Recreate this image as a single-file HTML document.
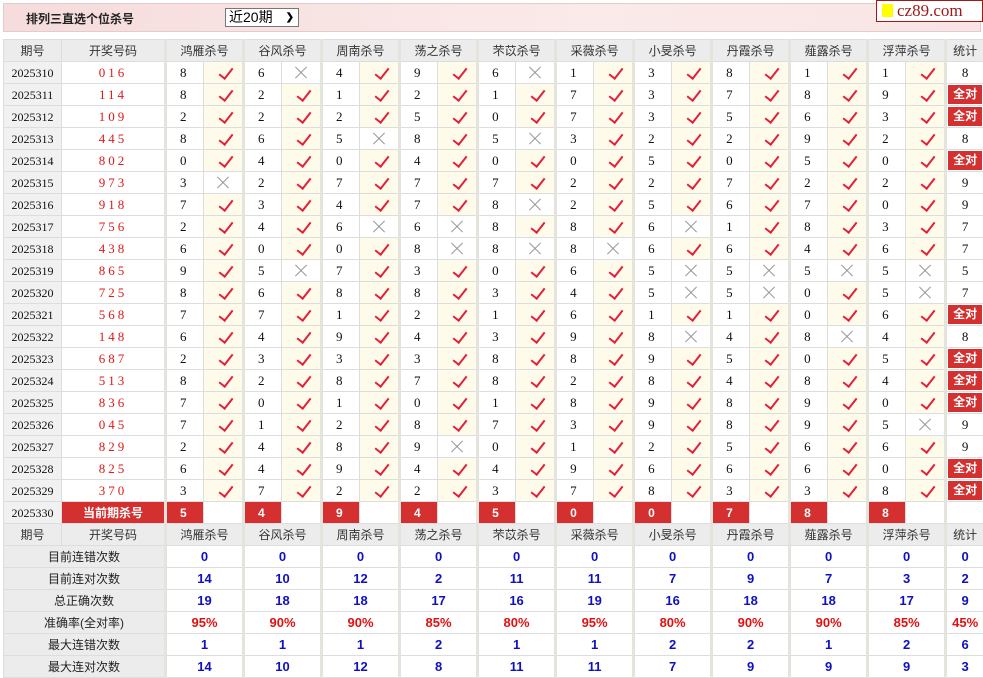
<!DOCTYPE html>
<html><head><meta charset="utf-8"><style>
body{margin:0;background:#fff;width:983px;height:678px;overflow:hidden;position:relative;font-family:"Liberation Serif","Noto Serif CJK SC",serif}
.top{position:absolute;left:3px;top:3px;width:976px;height:27px;background:linear-gradient(90deg,#f6dcdc,#fbeaea 60%,#f8e4e4);border:1px solid #e4cccc}
.title{position:absolute;left:22px;top:6px;font:bold 12px "Liberation Sans","Noto Sans CJK SC",sans-serif;color:#222}
.sel{position:absolute;left:221px;top:4px;width:69px;height:17px;border:1px solid #777;background:#fff;font:14px "Liberation Sans","Noto Sans CJK SC",sans-serif;line-height:17px;padding-left:3px;box-sizing:content-box}
.sel b{position:absolute;right:4px;top:0;font-size:10px}
.logo{position:absolute;left:876px;top:0;width:105px;height:20px;background:#fff;border:1px solid #a01818;font:17px "Liberation Serif",serif;color:#a01818;line-height:20px}
.logo i{display:inline-block;width:11px;height:13px;background:#ff0;margin:0 4px 0 5px;vertical-align:-1px}
table{position:absolute;left:3px;top:39px;border-collapse:collapse;table-layout:fixed;width:980px}
tr{height:22px}
td{height:21px;line-height:20px;border:1px solid #ddd;text-align:center;padding:0;font-size:13px;color:#111;overflow:hidden;white-space:nowrap;box-sizing:border-box}
.h td{background:#ececec;font:12px "Liberation Sans","Noto Sans CJK SC",sans-serif;color:#333;line-height:20px}
td.p{background:#f1f1f1;font-size:12px}
td.c{color:#e01818;letter-spacing:3px}
td.g{border-left:3px solid #e4e4dc;text-align:left;padding-left:13px}
.h td.s,td.s{border-left:3px solid #e4e4dc}
td.k{background:#fffbea;position:relative}
td.k:after{content:"";position:absolute;left:18px;top:3px;width:6px;height:12px;border-right:2px solid #e2213c;border-bottom:2px solid #e2213c;transform:rotate(38deg)}
td.x{position:relative}
td.x:before,td.x:after{content:"";position:absolute;left:11px;top:10px;width:16px;height:1px;background:#999;transform:rotate(45deg)}
td.x:after{transform:rotate(-45deg)}
td.q{padding:1px}
td.q span{display:block;background:#d43030;color:#fff;font:bold 12px "Liberation Sans","Noto Sans CJK SC",sans-serif;line-height:19px;height:19px}
td.r{background:#d43030;color:#fff;font:bold 12px "Liberation Sans","Noto Sans CJK SC",sans-serif;text-align:left;padding-left:13px}
td.rr{background:#d43030;color:#fff;font:bold 12px "Liberation Sans","Noto Sans CJK SC",sans-serif}
td.l{background:#ececec;font:12px "Liberation Sans","Noto Sans CJK SC",sans-serif;color:#222}
td.v{font:bold 13px "Liberation Sans",sans-serif;color:#1010c0;border-left:3px solid #e4e4dc;line-height:20px}
td.pc{font:bold 13px "Liberation Sans",sans-serif;color:#e01010;border-left:3px solid #e4e4dc;line-height:20px}
</style></head><body>
<div class="top"><div class="title">排列三直选个位杀号</div><div class="sel">近20期<b>&#10095;</b></div></div>
<div class="logo"><i></i>cz89.com</div>
<table>
<colgroup><col style="width:58px"><col style="width:104px"><col style="width:38px"><col style="width:40px"><col style="width:38px"><col style="width:40px"><col style="width:38px"><col style="width:40px"><col style="width:38px"><col style="width:40px"><col style="width:38px"><col style="width:40px"><col style="width:38px"><col style="width:40px"><col style="width:38px"><col style="width:40px"><col style="width:38px"><col style="width:40px"><col style="width:38px"><col style="width:40px"><col style="width:38px"><col style="width:40px"><col style="width:38px"></colgroup>
<tr class="h"><td>期号</td><td>开奖号码</td><td colspan="2" class="s">鸿雁杀号</td><td colspan="2" class="s">谷风杀号</td><td colspan="2" class="s">周南杀号</td><td colspan="2" class="s">荡之杀号</td><td colspan="2" class="s">芣苡杀号</td><td colspan="2" class="s">采薇杀号</td><td colspan="2" class="s">小旻杀号</td><td colspan="2" class="s">丹霞杀号</td><td colspan="2" class="s">薤露杀号</td><td colspan="2" class="s">浮萍杀号</td><td class="s">统计</td></tr>
<tr><td class="p">2025310</td><td class="c">016</td><td class="g">8</td><td class="k"></td><td class="g">6</td><td class="x"></td><td class="g">4</td><td class="k"></td><td class="g">9</td><td class="k"></td><td class="g">6</td><td class="x"></td><td class="g">1</td><td class="k"></td><td class="g">3</td><td class="k"></td><td class="g">8</td><td class="k"></td><td class="g">1</td><td class="k"></td><td class="g">1</td><td class="k"></td><td class="s">8</td></tr>
<tr><td class="p">2025311</td><td class="c">114</td><td class="g">8</td><td class="k"></td><td class="g">2</td><td class="k"></td><td class="g">1</td><td class="k"></td><td class="g">2</td><td class="k"></td><td class="g">1</td><td class="k"></td><td class="g">7</td><td class="k"></td><td class="g">3</td><td class="k"></td><td class="g">7</td><td class="k"></td><td class="g">8</td><td class="k"></td><td class="g">9</td><td class="k"></td><td class="s q"><span>全对</span></td></tr>
<tr><td class="p">2025312</td><td class="c">109</td><td class="g">2</td><td class="k"></td><td class="g">2</td><td class="k"></td><td class="g">2</td><td class="k"></td><td class="g">5</td><td class="k"></td><td class="g">0</td><td class="k"></td><td class="g">7</td><td class="k"></td><td class="g">3</td><td class="k"></td><td class="g">5</td><td class="k"></td><td class="g">6</td><td class="k"></td><td class="g">3</td><td class="k"></td><td class="s q"><span>全对</span></td></tr>
<tr><td class="p">2025313</td><td class="c">445</td><td class="g">8</td><td class="k"></td><td class="g">6</td><td class="k"></td><td class="g">5</td><td class="x"></td><td class="g">8</td><td class="k"></td><td class="g">5</td><td class="x"></td><td class="g">3</td><td class="k"></td><td class="g">2</td><td class="k"></td><td class="g">2</td><td class="k"></td><td class="g">9</td><td class="k"></td><td class="g">2</td><td class="k"></td><td class="s">8</td></tr>
<tr><td class="p">2025314</td><td class="c">802</td><td class="g">0</td><td class="k"></td><td class="g">4</td><td class="k"></td><td class="g">0</td><td class="k"></td><td class="g">4</td><td class="k"></td><td class="g">0</td><td class="k"></td><td class="g">0</td><td class="k"></td><td class="g">5</td><td class="k"></td><td class="g">0</td><td class="k"></td><td class="g">5</td><td class="k"></td><td class="g">0</td><td class="k"></td><td class="s q"><span>全对</span></td></tr>
<tr><td class="p">2025315</td><td class="c">973</td><td class="g">3</td><td class="x"></td><td class="g">2</td><td class="k"></td><td class="g">7</td><td class="k"></td><td class="g">7</td><td class="k"></td><td class="g">7</td><td class="k"></td><td class="g">2</td><td class="k"></td><td class="g">2</td><td class="k"></td><td class="g">7</td><td class="k"></td><td class="g">2</td><td class="k"></td><td class="g">2</td><td class="k"></td><td class="s">9</td></tr>
<tr><td class="p">2025316</td><td class="c">918</td><td class="g">7</td><td class="k"></td><td class="g">3</td><td class="k"></td><td class="g">4</td><td class="k"></td><td class="g">7</td><td class="k"></td><td class="g">8</td><td class="x"></td><td class="g">2</td><td class="k"></td><td class="g">5</td><td class="k"></td><td class="g">6</td><td class="k"></td><td class="g">7</td><td class="k"></td><td class="g">0</td><td class="k"></td><td class="s">9</td></tr>
<tr><td class="p">2025317</td><td class="c">756</td><td class="g">2</td><td class="k"></td><td class="g">4</td><td class="k"></td><td class="g">6</td><td class="x"></td><td class="g">6</td><td class="x"></td><td class="g">8</td><td class="k"></td><td class="g">8</td><td class="k"></td><td class="g">6</td><td class="x"></td><td class="g">1</td><td class="k"></td><td class="g">8</td><td class="k"></td><td class="g">3</td><td class="k"></td><td class="s">7</td></tr>
<tr><td class="p">2025318</td><td class="c">438</td><td class="g">6</td><td class="k"></td><td class="g">0</td><td class="k"></td><td class="g">0</td><td class="k"></td><td class="g">8</td><td class="x"></td><td class="g">8</td><td class="x"></td><td class="g">8</td><td class="x"></td><td class="g">6</td><td class="k"></td><td class="g">6</td><td class="k"></td><td class="g">4</td><td class="k"></td><td class="g">6</td><td class="k"></td><td class="s">7</td></tr>
<tr><td class="p">2025319</td><td class="c">865</td><td class="g">9</td><td class="k"></td><td class="g">5</td><td class="x"></td><td class="g">7</td><td class="k"></td><td class="g">3</td><td class="k"></td><td class="g">0</td><td class="k"></td><td class="g">6</td><td class="k"></td><td class="g">5</td><td class="x"></td><td class="g">5</td><td class="x"></td><td class="g">5</td><td class="x"></td><td class="g">5</td><td class="x"></td><td class="s">5</td></tr>
<tr><td class="p">2025320</td><td class="c">725</td><td class="g">8</td><td class="k"></td><td class="g">6</td><td class="k"></td><td class="g">8</td><td class="k"></td><td class="g">8</td><td class="k"></td><td class="g">3</td><td class="k"></td><td class="g">4</td><td class="k"></td><td class="g">5</td><td class="x"></td><td class="g">5</td><td class="x"></td><td class="g">0</td><td class="k"></td><td class="g">5</td><td class="x"></td><td class="s">7</td></tr>
<tr><td class="p">2025321</td><td class="c">568</td><td class="g">7</td><td class="k"></td><td class="g">7</td><td class="k"></td><td class="g">1</td><td class="k"></td><td class="g">2</td><td class="k"></td><td class="g">1</td><td class="k"></td><td class="g">6</td><td class="k"></td><td class="g">1</td><td class="k"></td><td class="g">1</td><td class="k"></td><td class="g">0</td><td class="k"></td><td class="g">6</td><td class="k"></td><td class="s q"><span>全对</span></td></tr>
<tr><td class="p">2025322</td><td class="c">148</td><td class="g">6</td><td class="k"></td><td class="g">4</td><td class="k"></td><td class="g">9</td><td class="k"></td><td class="g">4</td><td class="k"></td><td class="g">3</td><td class="k"></td><td class="g">9</td><td class="k"></td><td class="g">8</td><td class="x"></td><td class="g">4</td><td class="k"></td><td class="g">8</td><td class="x"></td><td class="g">4</td><td class="k"></td><td class="s">8</td></tr>
<tr><td class="p">2025323</td><td class="c">687</td><td class="g">2</td><td class="k"></td><td class="g">3</td><td class="k"></td><td class="g">3</td><td class="k"></td><td class="g">3</td><td class="k"></td><td class="g">8</td><td class="k"></td><td class="g">8</td><td class="k"></td><td class="g">9</td><td class="k"></td><td class="g">5</td><td class="k"></td><td class="g">0</td><td class="k"></td><td class="g">5</td><td class="k"></td><td class="s q"><span>全对</span></td></tr>
<tr><td class="p">2025324</td><td class="c">513</td><td class="g">8</td><td class="k"></td><td class="g">2</td><td class="k"></td><td class="g">8</td><td class="k"></td><td class="g">7</td><td class="k"></td><td class="g">8</td><td class="k"></td><td class="g">2</td><td class="k"></td><td class="g">8</td><td class="k"></td><td class="g">4</td><td class="k"></td><td class="g">8</td><td class="k"></td><td class="g">4</td><td class="k"></td><td class="s q"><span>全对</span></td></tr>
<tr><td class="p">2025325</td><td class="c">836</td><td class="g">7</td><td class="k"></td><td class="g">0</td><td class="k"></td><td class="g">1</td><td class="k"></td><td class="g">0</td><td class="k"></td><td class="g">1</td><td class="k"></td><td class="g">8</td><td class="k"></td><td class="g">9</td><td class="k"></td><td class="g">8</td><td class="k"></td><td class="g">9</td><td class="k"></td><td class="g">0</td><td class="k"></td><td class="s q"><span>全对</span></td></tr>
<tr><td class="p">2025326</td><td class="c">045</td><td class="g">7</td><td class="k"></td><td class="g">1</td><td class="k"></td><td class="g">2</td><td class="k"></td><td class="g">8</td><td class="k"></td><td class="g">7</td><td class="k"></td><td class="g">3</td><td class="k"></td><td class="g">9</td><td class="k"></td><td class="g">8</td><td class="k"></td><td class="g">9</td><td class="k"></td><td class="g">5</td><td class="x"></td><td class="s">9</td></tr>
<tr><td class="p">2025327</td><td class="c">829</td><td class="g">2</td><td class="k"></td><td class="g">4</td><td class="k"></td><td class="g">8</td><td class="k"></td><td class="g">9</td><td class="x"></td><td class="g">0</td><td class="k"></td><td class="g">1</td><td class="k"></td><td class="g">2</td><td class="k"></td><td class="g">5</td><td class="k"></td><td class="g">6</td><td class="k"></td><td class="g">6</td><td class="k"></td><td class="s">9</td></tr>
<tr><td class="p">2025328</td><td class="c">825</td><td class="g">6</td><td class="k"></td><td class="g">4</td><td class="k"></td><td class="g">9</td><td class="k"></td><td class="g">4</td><td class="k"></td><td class="g">4</td><td class="k"></td><td class="g">9</td><td class="k"></td><td class="g">6</td><td class="k"></td><td class="g">6</td><td class="k"></td><td class="g">6</td><td class="k"></td><td class="g">0</td><td class="k"></td><td class="s q"><span>全对</span></td></tr>
<tr><td class="p">2025329</td><td class="c">370</td><td class="g">3</td><td class="k"></td><td class="g">7</td><td class="k"></td><td class="g">2</td><td class="k"></td><td class="g">2</td><td class="k"></td><td class="g">3</td><td class="k"></td><td class="g">7</td><td class="k"></td><td class="g">8</td><td class="k"></td><td class="g">3</td><td class="k"></td><td class="g">3</td><td class="k"></td><td class="g">8</td><td class="k"></td><td class="s q"><span>全对</span></td></tr>
<tr><td class="p">2025330</td><td class="rr">当前期杀号</td><td class="g r">5</td><td></td><td class="g r">4</td><td></td><td class="g r">9</td><td></td><td class="g r">4</td><td></td><td class="g r">5</td><td></td><td class="g r">0</td><td></td><td class="g r">0</td><td></td><td class="g r">7</td><td></td><td class="g r">8</td><td></td><td class="g r">8</td><td></td><td class="s"></td></tr>
<tr class="h"><td>期号</td><td>开奖号码</td><td colspan="2" class="s">鸿雁杀号</td><td colspan="2" class="s">谷风杀号</td><td colspan="2" class="s">周南杀号</td><td colspan="2" class="s">荡之杀号</td><td colspan="2" class="s">芣苡杀号</td><td colspan="2" class="s">采薇杀号</td><td colspan="2" class="s">小旻杀号</td><td colspan="2" class="s">丹霞杀号</td><td colspan="2" class="s">薤露杀号</td><td colspan="2" class="s">浮萍杀号</td><td class="s">统计</td></tr>
<tr><td colspan="2" class="l">目前连错次数</td><td colspan="2" class="v">0</td><td colspan="2" class="v">0</td><td colspan="2" class="v">0</td><td colspan="2" class="v">0</td><td colspan="2" class="v">0</td><td colspan="2" class="v">0</td><td colspan="2" class="v">0</td><td colspan="2" class="v">0</td><td colspan="2" class="v">0</td><td colspan="2" class="v">0</td><td class="v">0</td></tr>
<tr><td colspan="2" class="l">目前连对次数</td><td colspan="2" class="v">14</td><td colspan="2" class="v">10</td><td colspan="2" class="v">12</td><td colspan="2" class="v">2</td><td colspan="2" class="v">11</td><td colspan="2" class="v">11</td><td colspan="2" class="v">7</td><td colspan="2" class="v">9</td><td colspan="2" class="v">7</td><td colspan="2" class="v">3</td><td class="v">2</td></tr>
<tr><td colspan="2" class="l">总正确次数</td><td colspan="2" class="v">19</td><td colspan="2" class="v">18</td><td colspan="2" class="v">18</td><td colspan="2" class="v">17</td><td colspan="2" class="v">16</td><td colspan="2" class="v">19</td><td colspan="2" class="v">16</td><td colspan="2" class="v">18</td><td colspan="2" class="v">18</td><td colspan="2" class="v">17</td><td class="v">9</td></tr>
<tr><td colspan="2" class="l">准确率(全对率)</td><td colspan="2" class="pc">95%</td><td colspan="2" class="pc">90%</td><td colspan="2" class="pc">90%</td><td colspan="2" class="pc">85%</td><td colspan="2" class="pc">80%</td><td colspan="2" class="pc">95%</td><td colspan="2" class="pc">80%</td><td colspan="2" class="pc">90%</td><td colspan="2" class="pc">90%</td><td colspan="2" class="pc">85%</td><td class="pc">45%</td></tr>
<tr><td colspan="2" class="l">最大连错次数</td><td colspan="2" class="v">1</td><td colspan="2" class="v">1</td><td colspan="2" class="v">1</td><td colspan="2" class="v">2</td><td colspan="2" class="v">1</td><td colspan="2" class="v">1</td><td colspan="2" class="v">2</td><td colspan="2" class="v">2</td><td colspan="2" class="v">1</td><td colspan="2" class="v">2</td><td class="v">6</td></tr>
<tr><td colspan="2" class="l">最大连对次数</td><td colspan="2" class="v">14</td><td colspan="2" class="v">10</td><td colspan="2" class="v">12</td><td colspan="2" class="v">8</td><td colspan="2" class="v">11</td><td colspan="2" class="v">11</td><td colspan="2" class="v">7</td><td colspan="2" class="v">9</td><td colspan="2" class="v">9</td><td colspan="2" class="v">9</td><td class="v">3</td></tr>
</table>
</body></html>
